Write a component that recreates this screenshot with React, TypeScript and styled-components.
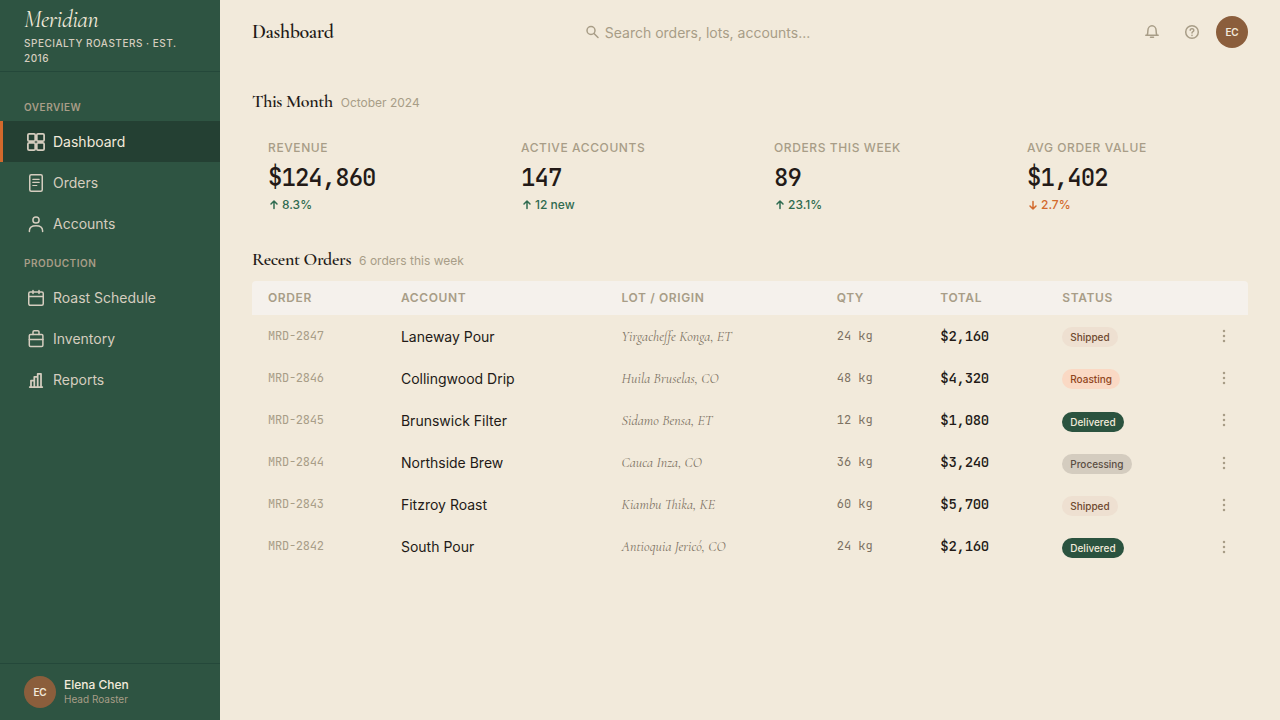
import React from "react";
import styled, { createGlobalStyle, css } from "styled-components";

const color = {
  cream: "#f2eadb",
  forest: "#2e5442",
  forestDark: "#244033",
  line: "#24483a",
  ink: "#231a17",
  muted: "#a89d87",
  taupe: "#7d7263",
  sand: "#d5cdbf",
  surface: "#f5f1ec",
  brown: "#8b5e3c",
  orange: "#d2692c",
  green: "#2f6b50",
};

const sans = `Inter, "Liberation Sans", sans-serif`;
const serif = `"Cormorant Garamond", Cormorant, "Liberation Serif", serif`;
const mono = `"JetBrains Mono", "Liberation Mono", monospace`;

const GlobalStyle = createGlobalStyle`
  *, *::before, *::after { box-sizing: border-box; }
  body { margin: 0; background: ${color.cream}; color: ${color.ink}; font: 14px/1.5 ${sans}; }
  h1, h2, ul { margin: 0; padding: 0; }
  ul { list-style: none; }
  button { border: 0; padding: 0; background: none; font: inherit; cursor: pointer; }
`;

const Shell = styled.div`
  display: grid;
  grid-template-columns: 220px minmax(0, 1fr);
  min-height: 100vh;
`;

const Sidebar = styled.aside`
  display: flex;
  flex-direction: column;
  background: ${color.forest};
  color: ${color.sand};
`;

const Brand = styled.div`
  display: flex;
  flex-direction: column;
  justify-content: center;
  gap: 2px;
  height: 72px;
  padding: 0 24px;
  border-bottom: 1px solid ${color.line};
`;

const BrandName = styled.div`
  font: italic 400 24px/29px ${serif};
  letter-spacing: -0.02em;
  color: ${color.cream};
`;

const BrandTag = styled.div`
  font-size: 10px;
  line-height: 15px;
  font-weight: 500;
  letter-spacing: 0.05em;
  text-transform: uppercase;
`;

const Nav = styled.nav`
  flex: 1;
  padding: 16px 0;
`;

const NavLabel = styled.div`
  padding: 12px 24px 6px;
  font-size: 10px;
  line-height: 15px;
  font-weight: 600;
  letter-spacing: 0.05em;
  text-transform: uppercase;
  color: ${color.muted};
`;

const NavLink = styled.a<{ $active?: boolean }>`
  display: flex;
  align-items: center;
  gap: 8px;
  padding: 10px 24px;
  border-left: 3px solid transparent;
  line-height: 21px;
  color: ${color.sand};
  text-decoration: none;
  ${(p) =>
    p.$active &&
    css`
      background: ${color.forestDark};
      border-left-color: ${color.orange};
      color: ${color.cream};
    `}
`;

const Icon = styled.svg`
  flex: none;
  display: block;
  fill: none;
  stroke: currentColor;
  stroke-width: 1.5;
  stroke-linecap: round;
  stroke-linejoin: round;
`;

const NavIcon = styled(Icon).attrs({ width: 18, height: 18, viewBox: "0 0 18 18", "aria-hidden": true })`
  color: ${color.sand};
`;

const Profile = styled.div`
  display: flex;
  align-items: center;
  gap: 8px;
  padding: 12px 24px;
  border-top: 1px solid ${color.line};
`;

const Avatar = styled.span`
  display: grid;
  place-items: center;
  width: 32px;
  height: 32px;
  border-radius: 50%;
  background: ${color.brown};
  color: ${color.cream};
  font-size: 10px;
  font-weight: 600;
  letter-spacing: -0.02em;
`;

const ProfileName = styled.div`
  font-size: 12px;
  line-height: 14px;
  font-weight: 500;
  color: ${color.cream};
`;

const ProfileRole = styled.div`
  font-size: 10px;
  line-height: 14px;
  color: ${color.muted};
`;

const Main = styled.main`
  min-width: 0;
`;

const TopBar = styled.header`
  display: flex;
  align-items: center;
  justify-content: space-between;
  height: 64px;
  padding: 0 32px;
`;

const PageTitle = styled.h1`
  font: 600 20px/30px ${serif};
  letter-spacing: -0.02em;
`;

const Search = styled.label`
  display: flex;
  align-items: center;
  gap: 5px;
  width: 320px;
  padding: 0 9px;
  color: ${color.muted};
`;

const SearchInput = styled.input`
  flex: 1;
  min-width: 0;
  padding: 0;
  border: 0;
  outline: 0;
  background: none;
  font: 14px/21px ${sans};
  color: ${color.ink};
  &::placeholder { color: ${color.muted}; opacity: 1; }
`;

const Actions = styled.div`
  display: flex;
  gap: 8px;
`;

const IconButton = styled.button`
  display: grid;
  place-items: center;
  width: 32px;
  height: 32px;
  color: ${color.muted};
`;

const Content = styled.div`
  display: grid;
  gap: 16px;
  padding: 24px 32px;
`;

const SectionHead = styled.div`
  display: flex;
  align-items: baseline;
  gap: 8px;
  margin-bottom: 8px;
`;

const SectionTitle = styled.h2`
  font: 600 18px/27px ${serif};
  letter-spacing: -0.02em;
`;

const SectionNote = styled.span`
  font-size: 12px;
  line-height: 18px;
  color: ${color.muted};
`;

const Stats = styled.div`
  display: grid;
  grid-template-columns: repeat(4, minmax(0, 1fr));
  gap: 16px;
`;

const Stat = styled.div`
  padding: 16px;
`;

const StatLabel = styled.div`
  margin-bottom: 3px;
  font-size: 12px;
  line-height: 18px;
  font-weight: 500;
  letter-spacing: 0.05em;
  text-transform: uppercase;
  color: ${color.muted};
`;

const StatValue = styled.div`
  font: 500 24px/36px ${mono};
  letter-spacing: -0.04em;
`;

const StatChange = styled.div<{ $down?: boolean }>`
  display: flex;
  align-items: center;
  gap: 2px;
  font-size: 12px;
  line-height: 18px;
  font-weight: 500;
  color: ${(p) => (p.$down ? color.orange : color.green)};
`;

const Table = styled.table`
  width: 100%;
  table-layout: fixed;
  border-collapse: separate;
  border-spacing: 0;
`;

const Col = styled.col<{ $share?: number }>`
  ${(p) => p.$share && `width: ${p.$share}%;`}
`;

const Th = styled.th`
  padding: 8px 16px;
  background: ${color.surface};
  text-align: left;
  font-size: 12px;
  line-height: 18px;
  font-weight: 600;
  letter-spacing: 0.05em;
  text-transform: uppercase;
  color: ${color.muted};
  &:first-child { border-top-left-radius: 4px; }
  &:last-child { border-top-right-radius: 4px; }
`;

const Td = styled.td`
  padding: 10px 16px;
  line-height: 21px;
  white-space: nowrap;
`;

const OrderCell = styled(Td)`
  font-family: ${mono};
  font-size: 12px;
  letter-spacing: -0.02em;
  color: ${color.muted};
`;

const LotCell = styled(Td)`
  font-family: ${serif};
  font-style: italic;
  color: ${color.taupe};
`;

const QtyCell = styled(Td)`
  font-family: ${mono};
  font-size: 12px;
  color: ${color.taupe};
`;

const TotalCell = styled(Td)`
  font-family: ${mono};
  font-weight: 500;
  letter-spacing: -0.02em;
`;

type Status = "Shipped" | "Roasting" | "Delivered" | "Processing";

const badgeColors: Record<Status, [string, string]> = {
  Shipped: ["#eee0d1", "#6f4a30"],
  Roasting: ["#fad9c4", "#8f4520"],
  Delivered: ["#2b533f", "#f2eadb"],
  Processing: ["#d4ccbf", "#5a4e43"],
};

const Badge = styled.span<{ $status: Status }>`
  display: inline-block;
  padding: 3px 8px;
  border-radius: 10px;
  font-size: 10px;
  line-height: 14px;
  font-weight: 500;
  vertical-align: middle;
  background: ${(p) => badgeColors[p.$status][0]};
  color: ${(p) => badgeColors[p.$status][1]};
`;

const MenuButton = styled.button`
  display: block;
  margin-left: auto;
  color: ${color.muted};
`;

const Dots = styled.svg`
  display: block;
  fill: currentColor;
`;

const navGroups = [
  {
    label: "Overview",
    items: [
      {
        name: "Dashboard",
        icon: (
          <g strokeWidth="1.75">
            <rect x="0.9" y="0.9" width="7.3" height="7.3" rx="1.2" />
            <rect x="9.8" y="0.9" width="7.3" height="7.3" rx="1.2" />
            <rect x="0.9" y="9.8" width="7.3" height="7.3" rx="1.2" />
            <rect x="9.8" y="9.8" width="7.3" height="7.3" rx="1.2" />
          </g>
        ),
      },
      {
        name: "Orders",
        icon: (
          <>
            <rect x="2.75" y="0.75" width="12.5" height="16.5" rx="1.5" />
            <path d="M5.8 5.3h6.4M5.8 8.4h6.4M5.8 11.5h4" strokeWidth="1.2" />
          </>
        ),
      },
      {
        name: "Accounts",
        icon: (
          <>
            <circle cx="9" cy="5" r="3.1" />
            <path d="M2.4 16.4v-.6c0-3 2.6-5 6.6-5s6.6 2 6.6 5v.6" />
          </>
        ),
      },
    ],
  },
  {
    label: "Production",
    items: [
      {
        name: "Roast Schedule",
        icon: (
          <>
            <rect x="1.75" y="3" width="14.5" height="13.3" rx="1.5" />
            <path d="M1.75 7.4h14.5M6 1.5v3M12 1.5v3" />
          </>
        ),
      },
      {
        name: "Inventory",
        icon: (
          <>
            <rect x="2.3" y="4.6" width="13.6" height="11.8" rx="1.2" />
            <path d="M6 4.6V2A1.2 1.2 0 0 1 7.2.8h3.6A1.2 1.2 0 0 1 12 2v2.6M2.3 9.6h13.6" />
          </>
        ),
      },
      {
        name: "Reports",
        icon: (
          <g strokeWidth="1.75">
            <path d="M2.7 16h12.6M4 16V9.6h3.3V16M7.3 16V5.8h3.4V16M10.7 16V2.8H14V16" />
          </g>
        ),
      },
    ],
  },
];

const stats = [
  { label: "Revenue", value: "$124,860", change: "8.3%" },
  { label: "Active Accounts", value: "147", change: "12 new" },
  { label: "Orders This Week", value: "89", change: "23.1%" },
  { label: "Avg Order Value", value: "$1,402", change: "2.7%", down: true },
];

const orders: { id: string; account: string; lot: string; qty: string; total: string; status: Status }[] = [
  { id: "MRD-2847", account: "Laneway Pour", lot: "Yirgacheffe Konga, ET", qty: "24 kg", total: "$2,160", status: "Shipped" },
  { id: "MRD-2846", account: "Collingwood Drip", lot: "Huila Bruselas, CO", qty: "48 kg", total: "$4,320", status: "Roasting" },
  { id: "MRD-2845", account: "Brunswick Filter", lot: "Sidamo Bensa, ET", qty: "12 kg", total: "$1,080", status: "Delivered" },
  { id: "MRD-2844", account: "Northside Brew", lot: "Cauca Inza, CO", qty: "36 kg", total: "$3,240", status: "Processing" },
  { id: "MRD-2843", account: "Fitzroy Roast", lot: "Kiambu Thika, KE", qty: "60 kg", total: "$5,700", status: "Shipped" },
  { id: "MRD-2842", account: "South Pour", lot: "Antioquia Jericó, CO", qty: "24 kg", total: "$2,160", status: "Delivered" },
];

export default function App() {
  return (
    <>
      <GlobalStyle />
      <Shell>
        <Sidebar>
          <Brand>
            <BrandName>Meridian</BrandName>
            <BrandTag>Specialty Roasters · Est. 2016</BrandTag>
          </Brand>
          <Nav>
            {navGroups.map((group) => (
              <div key={group.label}>
                <NavLabel>{group.label}</NavLabel>
                <ul>
                  {group.items.map((item) => (
                    <li key={item.name}>
                      <NavLink href="#" $active={item.name === "Dashboard"}>
                        <NavIcon>{item.icon}</NavIcon>
                        {item.name}
                      </NavLink>
                    </li>
                  ))}
                </ul>
              </div>
            ))}
          </Nav>
          <Profile>
            <Avatar>EC</Avatar>
            <div>
              <ProfileName>Elena Chen</ProfileName>
              <ProfileRole>Head Roaster</ProfileRole>
            </div>
          </Profile>
        </Sidebar>
        <Main>
          <TopBar>
            <PageTitle>Dashboard</PageTitle>
            <Search>
              <Icon width="16" height="16" viewBox="0 0 16 16" aria-hidden="true">
                <circle cx="7" cy="6.5" r="4" />
                <path d="m10 9.5 4 4" />
              </Icon>
              <SearchInput type="text" aria-label="Search" placeholder="Search orders, lots, accounts..." />
            </Search>
            <Actions>
              <IconButton aria-label="Notifications">
                <Icon width="16" height="16" viewBox="0 0 16 16" aria-hidden="true">
                  <path d="M1.8 11.2h12.4M3 11.2c.8-1 .9-2.3.9-4.6a4.1 4.9 0 0 1 8.2 0c0 2.3.1 3.6.9 4.6M6.5 13.3h3" />
                </Icon>
              </IconButton>
              <IconButton aria-label="Help">
                <Icon width="16" height="16" viewBox="0 0 16 16" aria-hidden="true">
                  <circle cx="8" cy="8" r="6.3" />
                  <path d="M6.2 6.3a1.8 1.6 0 1 1 2.7 1.4c-.6.4-.9.7-.9 1.3M8 11.3v.2" />
                </Icon>
              </IconButton>
              <Avatar>EC</Avatar>
            </Actions>
          </TopBar>
          <Content>
            <section>
              <SectionHead>
                <SectionTitle>This Month</SectionTitle>
                <SectionNote>October 2024</SectionNote>
              </SectionHead>
              <Stats>
                {stats.map((s) => (
                  <Stat key={s.label}>
                    <StatLabel>{s.label}</StatLabel>
                    <StatValue>{s.value}</StatValue>
                    <StatChange $down={s.down}>
                      <Icon width="12" height="12" viewBox="0 0 12 12" aria-hidden="true">
                        <path d={s.down ? "M6 2.5V10M3 7l3 3 3-3" : "M6 9.5V2M3 5l3-3 3 3"} />
                      </Icon>
                      {s.change}
                    </StatChange>
                  </Stat>
                ))}
              </Stats>
            </section>
            <section>
              <SectionHead>
                <SectionTitle>Recent Orders</SectionTitle>
                <SectionNote>6 orders this week</SectionNote>
              </SectionHead>
              <Table>
                <colgroup>
                  <Col $share={13.35} />
                  <Col $share={22.15} />
                  <Col $share={21.6} />
                  <Col $share={10.4} />
                  <Col $share={12.25} />
                  <Col $share={15} />
                  <Col />
                </colgroup>
                <thead>
                  <tr>
                    <Th scope="col">Order</Th>
                    <Th scope="col">Account</Th>
                    <Th scope="col">Lot / Origin</Th>
                    <Th scope="col">Qty</Th>
                    <Th scope="col">Total</Th>
                    <Th scope="col">Status</Th>
                    <Th scope="col" aria-label="Actions" />
                  </tr>
                </thead>
                <tbody>
                  {orders.map((o) => (
                    <tr key={o.id}>
                      <OrderCell>{o.id}</OrderCell>
                      <Td>{o.account}</Td>
                      <LotCell>{o.lot}</LotCell>
                      <QtyCell>{o.qty}</QtyCell>
                      <TotalCell>{o.total}</TotalCell>
                      <Td>
                        <Badge $status={o.status}>{o.status}</Badge>
                      </Td>
                      <Td>
                        <MenuButton aria-label={`Actions for ${o.id}`}>
                          <Dots width="16" height="16" viewBox="0 0 16 16" aria-hidden="true">
                            <circle cx="8" cy="3" r="1.25" />
                            <circle cx="8" cy="8" r="1.25" />
                            <circle cx="8" cy="13" r="1.25" />
                          </Dots>
                        </MenuButton>
                      </Td>
                    </tr>
                  ))}
                </tbody>
              </Table>
            </section>
          </Content>
        </Main>
      </Shell>
    </>
  );
}
